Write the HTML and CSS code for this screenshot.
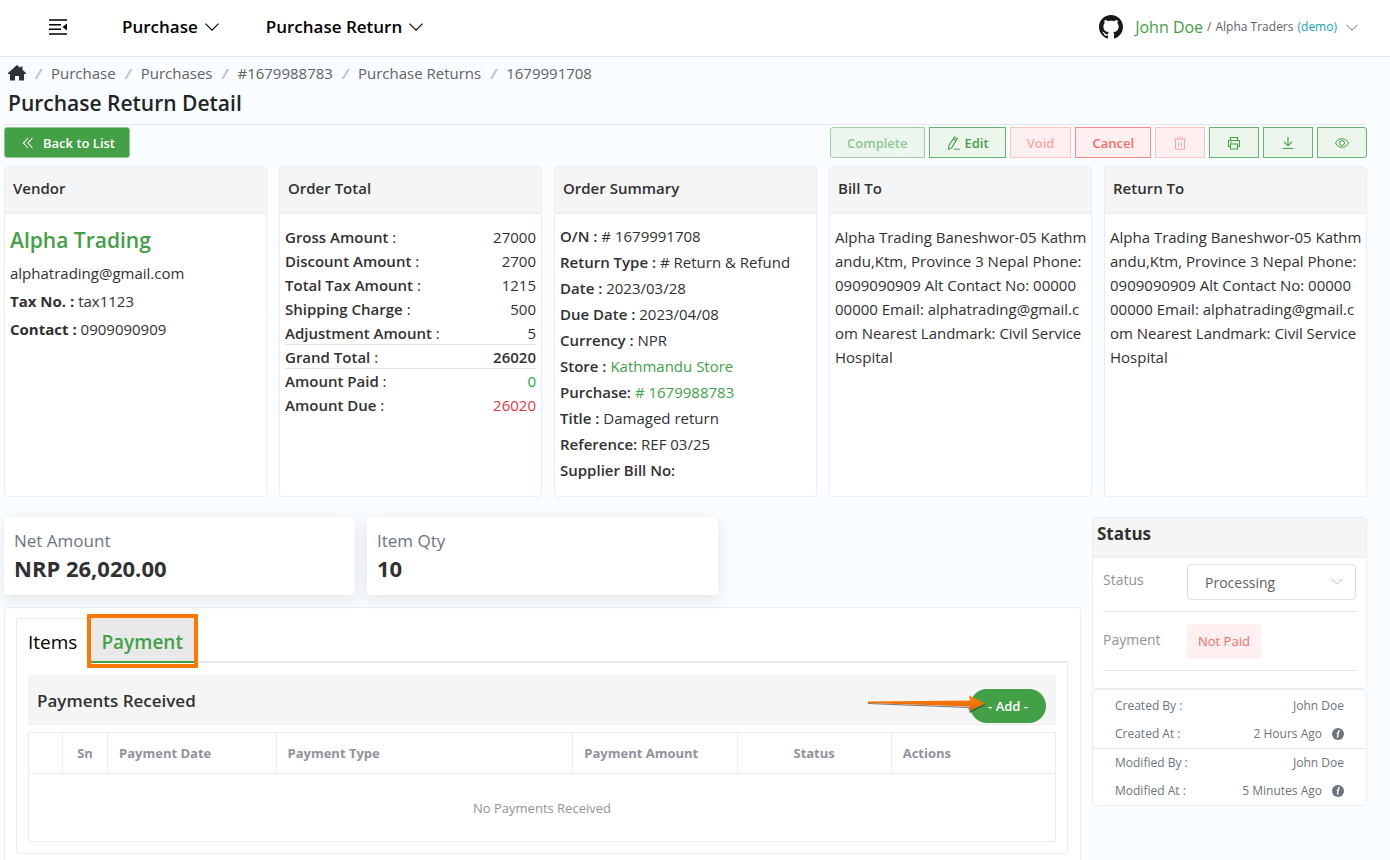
FILE: index.html
```html
<!DOCTYPE html>
<html lang="en">
<head>
<meta charset="utf-8">
<meta name="viewport" content="width=device-width, initial-scale=1">
<title>Purchase Return Detail</title>
<link rel="stylesheet" href="styles.css">
</head>
<body>
<svg class="sprite" aria-hidden="true">
  <symbol id="chevron" viewBox="0 0 14 8"><path d="M.5.700l6.500 6.500 6.500-6.500" fill="none" stroke="currentColor" stroke-width="1.100"/></symbol>
  <symbol id="info" viewBox="0 0 12 12"><circle cx="6" cy="6" r="6" fill="currentColor"/><circle cx="6.900" cy="3" r="1" fill="#fff"/><path d="M4.700 5.300l1.700-.5-.9 3.900c-.1.5.3.5 1 .1" fill="none" stroke="#fff" stroke-width="1.300"/></symbol>
</svg>
<header class="topbar">
  <button class="icon-btn" type="button" aria-label="Toggle menu">
    <svg class="menu-icon" viewBox="0 0 20 18"><path d="M1 2h18M1 6.700h12M1 11.300h12M1 16h18" stroke="currentColor" stroke-width="1.600" fill="none"/><path d="M19 5.500v7L14.500 9z" fill="currentColor"/></svg>
  </button>
  <nav class="main-nav">
    <button type="button" class="nav-item">Purchase <svg class="chev"><use href="#chevron"/></svg></button>
    <button type="button" class="nav-item">Purchase Return <svg class="chev"><use href="#chevron"/></svg></button>
  </nav>
  <div class="account">
    <a href="#" aria-label="GitHub"><svg class="github" viewBox="0 0 16 16"><path fill="#191717" d="M8 0C3.580 0 0 3.580 0 8c0 3.540 2.290 6.530 5.470 7.590.4.070.55-.17.55-.38 0-.19-.01-.82-.01-1.490-2.010.37-2.530-.49-2.690-.94-.09-.23-.48-.94-.82-1.130-.28-.15-.68-.52-.01-.53.63-.01 1.080.58 1.230.82.72 1.210 1.870.87 2.330.66.07-.52.28-.87.51-1.070-1.780-.2-3.640-.89-3.640-3.950 0-.87.31-1.590.82-2.150-.08-.2-.36-1.020.08-2.120 0 0 .67-.21 2.200.82.64-.18 1.320-.27 2-.27s1.360.09 2 .27c1.530-1.040 2.200-.82 2.200-.82.44 1.100.16 1.920.08 2.120.51.56.82 1.270.82 2.150 0 3.070-1.870 3.750-3.650 3.950.29.25.54.73.54 1.480 0 1.070-.01 1.930-.01 2.200 0 .21.15.46.55.38A8.010 8.010 0 0 0 16 8c0-4.420-3.580-8-8-8z"/></svg></a>
    <button type="button" class="user"><span class="user-name">John Doe</span> / <span>Alpha Traders</span> <span class="demo">(demo)</span> <svg class="chev chev-sm"><use href="#chevron"/></svg></button>
  </div>
</header>

<main class="page">
  <nav class="crumbs" aria-label="Breadcrumb">
    <a href="#" aria-label="Home"><svg class="home" viewBox="0 0 18 16"><path fill="#303133" d="M9 0l3.500 3V1.500h2V4.700L18 8v1h-2v6.500h-5V11H7v4.500H2V9H0V8z"/></svg></a>
    <i>/</i><a href="#">Purchase</a>
    <i>/</i><a href="#">Purchases</a>
    <i>/</i><a href="#">#1679988783</a>
    <i>/</i><a href="#">Purchase Returns</a>
    <i>/</i><span>1679991708</span>
  </nav>
  <h1>Purchase Return Detail</h1>

  <div class="toolbar">
    <button type="button" class="btn btn-back"><svg class="ico" viewBox="0 0 14 14"><path d="M7 2L2.500 7 7 12M11.500 2L7 7l4.500 5" fill="none" stroke="currentColor" stroke-width="1.100"/></svg>Back to List</button>
    <div class="actions">
      <button type="button" class="btn green faded first">Complete</button>
      <button type="button" class="btn green"><svg class="ico" viewBox="0 0 14 14"><path d="M8.500 1l2.800 1.600-5.500 9.200-3.300 1.400.4-3.800zM7.300 3l2.800 1.600M8 13.300h6" fill="none" stroke="currentColor" stroke-width="1.100"/></svg>Edit</button>
      <button type="button" class="btn red faded">Void</button>
      <button type="button" class="btn red">Cancel</button>
      <button type="button" class="btn icon-only red faded" aria-label="Delete"><svg class="ico" viewBox="0 0 14 14"><path d="M1 3.200h12M4.800 3V1.200h4.400V3M2.500 3.200v10h9v-10M5.500 6v4.500M8.500 6v4.500" fill="none" stroke="currentColor"/></svg></button>
      <button type="button" class="btn icon-only green" aria-label="Print"><svg class="ico" viewBox="0 0 14 14"><path d="M3.500 4.500v-3h7v3M3.500 10.500h-2v-6h11v6h-2M3.500 8h7v5h-7zM3.500 6.300h1.500" fill="none" stroke="currentColor" stroke-width="1.100"/></svg></button>
      <button type="button" class="btn icon-only green" aria-label="Download"><svg class="ico" viewBox="0 0 14 14"><path d="M7 1v8.500M3 5.800l4 4 4-4M1.500 12.500h11" fill="none" stroke="currentColor" stroke-width="1.100"/></svg></button>
      <button type="button" class="btn icon-only green last" aria-label="View"><svg class="ico" viewBox="0 0 14 14"><path d="M.5 7C3.500 1.200 10.500 1.200 13.500 7 10.500 12.800 3.500 12.800.5 7z" fill="none" stroke="currentColor"/><circle cx="7" cy="7" r="2.500" fill="none" stroke="currentColor"/></svg></button>
    </div>
  </div>

  <section class="cards">
    <article class="card">
      <h2>Vendor</h2>
      <div class="card-body vendor">
        <a class="vendor-name" href="#">Alpha Trading</a>
        <p>alphatrading@gmail.com</p>
        <p><b>Tax No. :</b> tax1123</p>
        <p><b>Contact :</b> 0909090909</p>
      </div>
    </article>
    <article class="card">
      <h2>Order Total</h2>
      <dl class="card-body totals">
        <div><dt><strong>Gross Amount</strong> :</dt><dd>27000</dd></div>
        <div><dt><strong>Discount Amount</strong> :</dt><dd>2700</dd></div>
        <div><dt><strong>Total Tax Amount</strong> :</dt><dd>1215</dd></div>
        <div><dt><strong>Shipping Charge</strong> :</dt><dd>500</dd></div>
        <div class="ruled"><dt><strong>Adjustment Amount</strong> :</dt><dd>5</dd></div>
        <div class="ruled"><dt><strong>Grand Total</strong> :</dt><dd class="strong">26020</dd></div>
        <div><dt><strong>Amount Paid</strong> :</dt><dd class="paid">0</dd></div>
        <div><dt><strong>Amount Due</strong> :</dt><dd class="due">26020</dd></div>
      </dl>
    </article>
    <article class="card">
      <h2>Order Summary</h2>
      <div class="card-body summary">
        <p><strong>O/N :</strong> # 1679991708</p>
        <p><strong>Return Type :</strong> # Return &amp; Refund</p>
        <p><strong>Date :</strong> 2023/03/28</p>
        <p><strong>Due Date :</strong> 2023/04/08</p>
        <p><strong>Currency :</strong> NPR</p>
        <p><strong>Store :</strong> <a href="#">Kathmandu Store</a></p>
        <p><strong>Purchase:</strong> <a href="#"># 1679988783</a></p>
        <p><strong>Title :</strong> Damaged return</p>
        <p><strong>Reference:</strong> REF 03/25</p>
        <p><strong>Supplier Bill No:</strong></p>
      </div>
    </article>
    <article class="card">
      <h2>Bill To</h2>
      <p class="card-body address">Alpha Trading Baneshwor-05 Kathm<br>andu,Ktm, Province 3 Nepal Phone:<br>0909090909 Alt Contact No: 00000<br>00000 Email: alphatrading@gmail.c<br>om Nearest Landmark: Civil Service<br>Hospital</p>
    </article>
    <article class="card">
      <h2>Return To</h2>
      <p class="card-body address">Alpha Trading Baneshwor-05 Kathm<br>andu,Ktm, Province 3 Nepal Phone:<br>0909090909 Alt Contact No: 00000<br>00000 Email: alphatrading@gmail.c<br>om Nearest Landmark: Civil Service<br>Hospital</p>
    </article>
  </section>

  <div class="lower">
    <div class="content">
      <div class="stats">
        <div class="stat"><span>Net Amount</span><b>NRP 26,020.00</b></div>
        <div class="stat"><span>Item Qty</span><b>10</b></div>
      </div>
      <section class="panel">
        <div class="tabs" role="tablist">
          <button type="button" role="tab" class="tab" aria-selected="false">Items</button>
          <button type="button" role="tab" class="tab active" aria-selected="true">Payment</button>
        </div>
        <div class="tab-body">
          <div class="pay-head">
            <h3>Payments Received</h3>
            <div class="add-wrap">
              <button type="button" class="add">- Add -</button>
              <svg class="arrow" viewBox="0 0 120 20">
                <defs><linearGradient id="arrowFill" x1="0" y1="0" x2="0" y2="1"><stop offset="0" stop-color="#ff8412"/><stop offset="1" stop-color="#e25f00"/></linearGradient></defs>
                <path d="M1 9.500L102 13.500 103 18 118 10.500" fill="none" stroke="#333" stroke-opacity=".65" stroke-width="1.200"/>
                <path d="M1 7.500L103 6.500 102 1.500 118 9.500 102 17 103 12.500 1 9z" fill="url(#arrowFill)"/>
              </svg>
            </div>
          </div>
          <table class="pay-table">
            <colgroup><col class="c-exp"><col class="c-sn"><col class="c-date"><col class="c-type"><col class="c-amt"><col class="c-status"><col class="c-act"></colgroup>
            <thead><tr><th></th><th class="mid">Sn</th><th>Payment Date</th><th>Payment Type</th><th>Payment Amount</th><th class="mid">Status</th><th>Actions</th></tr></thead>
            <tbody><tr><td colspan="7">No Payments Received</td></tr></tbody>
          </table>
        </div>
      </section>
    </div>

    <aside class="side">
      <section class="status-card">
        <h2>Status</h2>
        <div class="status-body">
          <div class="status-row">
            <label for="status">Status</label>
            <div class="select-wrap">
              <select id="status"><option>Processing</option></select>
              <svg class="chev chev-sm"><use href="#chevron"/></svg>
            </div>
          </div>
          <div class="status-row second">
            <span class="row-label">Payment</span>
            <span class="tag">Not Paid</span>
          </div>
        </div>
      </section>
      <dl class="meta">
        <div><dt>Created By :</dt><dd>John Doe</dd></div>
        <div><dt>Created At :</dt><dd>2 Hours Ago <svg class="info"><use href="#info"/></svg></dd></div>
        <div class="split"><dt>Modified By :</dt><dd>John Doe</dd></div>
        <div><dt>Modified At :</dt><dd>5 Minutes Ago <svg class="info"><use href="#info"/></svg></dd></div>
      </dl>
    </aside>
  </div>
</main>
</body>
</html>
```
FILE: styles.css
```css
* { box-sizing: border-box; }
body {
  margin: 0;
  background: #f9fdff;
  color: #303133;
  font: 15px/24px "Open Sans", "Noto Sans", sans-serif;
}
h1, h2, h3, p, dl, dd { margin: 0; }
button, select { font: inherit; color: inherit; }
button { cursor: pointer; }
a { color: inherit; text-decoration: none; }
strong { font-weight: 600; }
.sprite { display: none; }

.topbar {
  display: flex;
  align-items: center;
  height: 57px;
  padding: 0 32px 2px 48px;
  background: #fff;
  border-bottom: 1px solid #e4e7ed;
}
.icon-btn, .nav-item, .user { display: flex; align-items: center; padding: 0; border: 0; background: none; }
.menu-icon { width: 20px; height: 18px; color: #000; }
.main-nav { display: flex; gap: 47px; margin-left: 54px; }
.nav-item { gap: 7px; color: #000; font-size: 17px; font-weight: 600; }
.chev { width: 14px; height: 8px; }
.chev-sm { width: 12px; height: 7px; }
.account { display: flex; align-items: center; gap: 12px; margin-left: auto; }
.account a { display: flex; }
.github { width: 24px; height: 24px; }
.user { gap: 4px; font-size: 12px; color: #606266; }
.user-name { font-size: 16px; color: #43a047; }
.demo { color: #17a2b8; }
.user .chev { margin-left: 5px; }

.page { padding: 4px 23px 0 4px; }
.crumbs { display: flex; align-items: center; padding-left: 4px; color: #606266; font-size: 15px; }
.crumbs a { display: flex; }
.crumbs i { width: 25px; text-align: center; color: #c0c4cc; font-weight: 700; }
.home { width: 18px; height: 16px; }
h1 {
  padding: 3px 4px 6px;
  border-bottom: 1px solid #e4e7ed;
  color: #212529;
  font-size: 21px;
  line-height: 30px;
  font-weight: 600;
}

.toolbar { display: flex; justify-content: space-between; padding: 2px 0 8px; }
.actions { display: flex; gap: 4px; }
.btn {
  display: flex;
  align-items: center;
  gap: 5px;
  height: 31px;
  padding: 0 16px;
  border: 1px solid;
  font-size: 13px;
  font-weight: 600;
}
.icon-only { padding: 0 17px; }
.ico { width: 14px; height: 14px; }
.btn-back { gap: 8px; padding: 0 14px 0 16px; border-color: #8ec791; border-radius: 3px; background: #43a047; color: #fff; }
.green { background: #ecf6ed; color: #43a047; border-color: #69b36c; }
.red { background: #fef0f0; color: #f56c6c; border-color: #f78989; }
.green.faded { color: #8ec691; border-color: #a1d0a3; }
.red.faded { color: #f9a7a7; border-color: #fbc4c4; }
.first { border-radius: 3px 0 0 3px; }
.last { border-radius: 0 3px 3px 0; }

.cards { display: grid; grid-template-columns: repeat(5, 1fr); gap: 12px; margin-bottom: 20px; }
.card { border: 1px solid #ebeef0; border-radius: 4px; background: #fff; overflow: hidden; }
.card h2 { padding: 9px 8px 13px; background: #f5f5f5; border-bottom: 1px solid #ebebeb; font-size: 15px; font-weight: 600; }
.card-body { padding: 11px 5px; }
.vendor { padding-top: 12px; line-height: 28px; }
.vendor-name { display: block; margin-bottom: 5px; color: #43a047; font-size: 21px; font-weight: 600; }
.totals > div { display: flex; justify-content: space-between; }
.totals .ruled { box-shadow: inset 0 -1px #e2e2e2; }
.strong { font-weight: 600; }
.paid { color: #28a745; }
.due { color: #dc3545; }
.summary { padding-top: 9px; padding-bottom: 13px; line-height: 26px; }
.summary a { color: #43a047; }
.address { white-space: nowrap; }

.lower { display: grid; grid-template-columns: 1fr 275px; gap: 11px; }
.stats { display: grid; grid-template-columns: repeat(3, 1fr); gap: 12px; margin-bottom: 12px; }
.stat { display: flex; flex-direction: column; padding: 10px 10px 14px; border-radius: 4px; background: #fff; box-shadow: 0 4px 16px rgba(0, 0, 0, .1); }
.stat span { color: #6c757d; font-size: 17px; line-height: 28px; }
.stat b { font-size: 22px; line-height: 26px; }

.panel { padding: 10px 12px 20px 11px; border: 1px solid #ebeef0; border-radius: 4px 4px 0 0; background: #fff; }
.tabs { display: flex; height: 45px; border-bottom: 2px solid #e4e7ed; }
.tab { position: relative; height: 45px; padding: 2px 14px 0 11px; border: 1px solid #ebeef5; border-width: 1px 0 0 1px; background: #fff; color: #000; font-size: 19px; }
.tab.active { padding: 5px 11px 0 10px; border: 0; border-bottom: 2px solid #43a047; background: #e9e9e9; color: #43a047; font-weight: 600; }
.tab.active::after { content: ""; position: absolute; inset: -4px -4px -7px; border: 4px solid #ff7700; border-radius: 1px; }
.tab-body { padding: 12px 11px 11px; border: 1px solid #ebeef0; border-top: 0; border-radius: 0 0 4px 4px; }
.pay-head { display: flex; align-items: flex-start; justify-content: space-between; height: 50px; padding: 14px 10px 0 9px; margin-bottom: 7px; background: #f5f5f5; border-bottom: 1px solid #ebebeb; }
.pay-head h3 { font-size: 17px; font-weight: 600; }
.add-wrap { position: relative; }
.add { height: 34px; padding: 0 18px; border: 0; border-radius: 17px; background: #43a047; color: #fff; font-size: 13px; font-weight: 600; }
.arrow { position: absolute; width: 120px; height: 20px; right: 59px; top: 5px; }

.pay-table { width: 100%; table-layout: fixed; border-collapse: collapse; color: #909399; font-size: 13px; }
.pay-table th, .pay-table td { border: 1px solid #ebeef5; padding: 0 11px; }
.pay-table th { height: 41px; text-align: left; font-weight: 700; }
.pay-table th.mid { text-align: center; }
.pay-table td { height: 68px; text-align: center; }
.c-exp { width: 3.3%; } .c-sn { width: 4.4%; } .c-date { width: 16.4%; } .c-type { width: 28.9%; }
.c-amt { width: 16%; } .c-status { width: 15%; } .c-act { width: 16%; }

.status-card { border: 1px solid #ebeef0; border-radius: 4px; background: #fff; overflow: hidden; }
.status-card h2 { padding: 4px 4px 11px; background: #f5f5f5; border-bottom: 1px solid #ebebeb; font-size: 17px; font-weight: 700; }
.status-body { padding: 6px 10px 17px; }
.status-row { display: grid; grid-template-columns: 84px 1fr; align-items: start; padding-bottom: 11px; border-bottom: 1px solid #e4e4e4; color: #909399; font-size: 14px; }
.status-row label, .row-label { padding-top: 4px; }
.second { padding-top: 12px; }
.select-wrap { position: relative; display: flex; }
.select-wrap select { appearance: none; width: 100%; height: 36px; padding: 2px 17px 0; border: 1px solid #dcdfe6; border-radius: 4px; background: #fff; color: #606266; }
.select-wrap .chev { position: absolute; right: 13px; top: 14px; color: #b0b4bc; pointer-events: none; }
.tag { justify-self: start; padding: 0 11px; border-radius: 4px; background: #fef0f0; color: #f56c6c; font-size: 13px; line-height: 35px; }
.meta { padding: 2px 0 0; border: 1px solid #ebeef5; border-radius: 4px; background: #fff; color: #6c757d; font-size: 12px; line-height: 28px; }
.meta > div { display: flex; justify-content: space-between; padding: 0 22px; }
.meta .split { border-top: 1px solid #e6e9ec; }
.meta dd { display: flex; align-items: center; gap: 10px; }
.info { width: 12px; height: 12px; }
```
